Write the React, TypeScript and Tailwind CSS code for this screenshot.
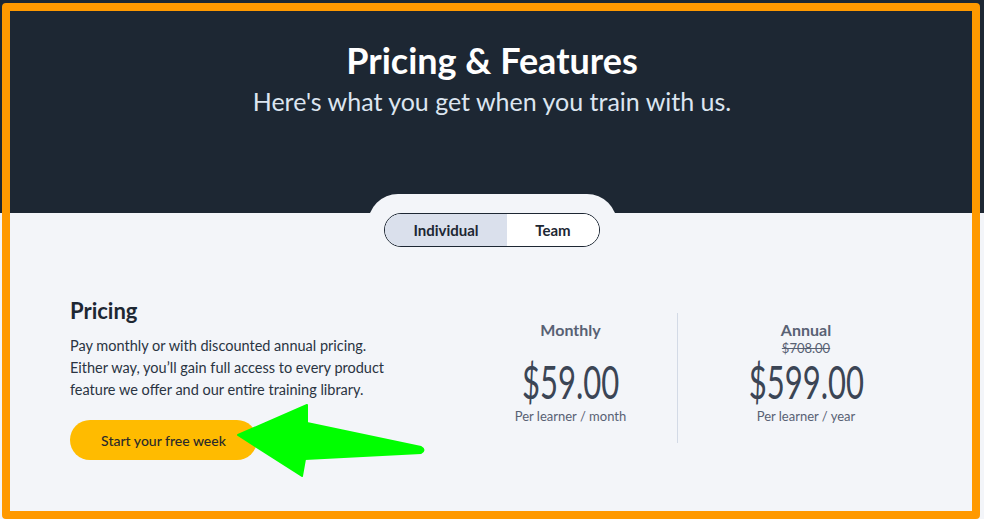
import React from 'react';

const sans = { fontFamily: 'Lato, "Noto Sans", sans-serif' };

function PriceColumn({ label, was, price, unit, className }: { label: string; was?: string; price: string; unit: string; className: string }) {
  return (
    <div className={`flex flex-col items-center pt-[7px] ${className}`}>
      <div className="text-[16px] leading-[20px] font-bold text-[#586174]">{label}</div>
      <div className="h-[17px] text-[13px] leading-[16px] text-[#586174] line-through">{was}</div>
      <div className="h-[48px] flex items-center justify-center">
        <span className="inline-block text-[47px] leading-[40px] font-normal text-[#3b4555] scale-x-[0.66]">{price}</span>
      </div>
      <div className="mt-[2px] text-[13px] leading-[18px] text-[#586174]">{unit}</div>
    </div>
  );
}

export default function App() {
  return (
    <div className="relative w-[984px] h-[519px] overflow-hidden bg-[#f3f5f9]" style={sans}>
      <div className="h-[213px] bg-[#1d2733] flex flex-col items-center pt-[39px]">
        <h1 className="text-[36px] leading-[42px] font-bold text-white">Pricing &amp; Features</h1>
        <p className="mt-[5px] text-[25px] leading-[30px] text-[#dce5f0]">Here's what you get when you train with us.</p>
      </div>

      <div className="mx-auto -mt-[19px] w-[249px] rounded-t-[30px] bg-[#f3f5f9] pt-[19px] flex justify-center">
        <div className="flex h-[34px] rounded-full border border-[#1d2733] overflow-hidden text-[15px] font-bold text-[#1d2733]">
          <div className="w-[122px] bg-[#dae0ec] flex items-center justify-center">Individual</div>
          <div className="w-[92px] bg-white flex items-center justify-center">Team</div>
        </div>
      </div>

      <div className="flex pl-[70px] mt-[50px]">
        <div className="w-[394px]">
          <h2 className="text-[22px] leading-[28px] font-bold text-[#1d2733]">Pricing</h2>
          <p className="mt-[10px] text-[14.5px] leading-[22px] text-[#2a3442]">
            Pay monthly or with discounted annual pricing.<br />
            Either way, you’ll gain full access to every product<br />
            feature we offer and our entire training library.
          </p>
          <button className="mt-[19px] h-[40px] w-[187px] rounded-full bg-[#ffbb00] text-[14px] font-medium text-[#2a2a2a]">
            Start your free week
          </button>
        </div>
        <div className="flex pt-[16px]">
          <PriceColumn className="w-[214px] border-r border-[#d3dae6] h-[130px]" label="Monthly" price="$59.00" unit="Per learner / month" />
          <PriceColumn className="w-[256px]" label="Annual" was="$708.00" price="$599.00" unit="Per learner / year" />
        </div>
      </div>

      <svg className="absolute left-0 top-0 pointer-events-none" width="984" height="519">
        <path d="M238 435 L307 405 L307 423 L421 447 Q426 450 421 453 L305 459 L302 476 Z" fill="#00ff00" stroke="#00ff00" strokeWidth="2" strokeLinejoin="round" />
      </svg>
      <div className="absolute left-[2px] top-[3px] w-[978px] h-[516px] rounded-[4px] border-[8px] border-[#ff9900] pointer-events-none" />
    </div>
  );
}
